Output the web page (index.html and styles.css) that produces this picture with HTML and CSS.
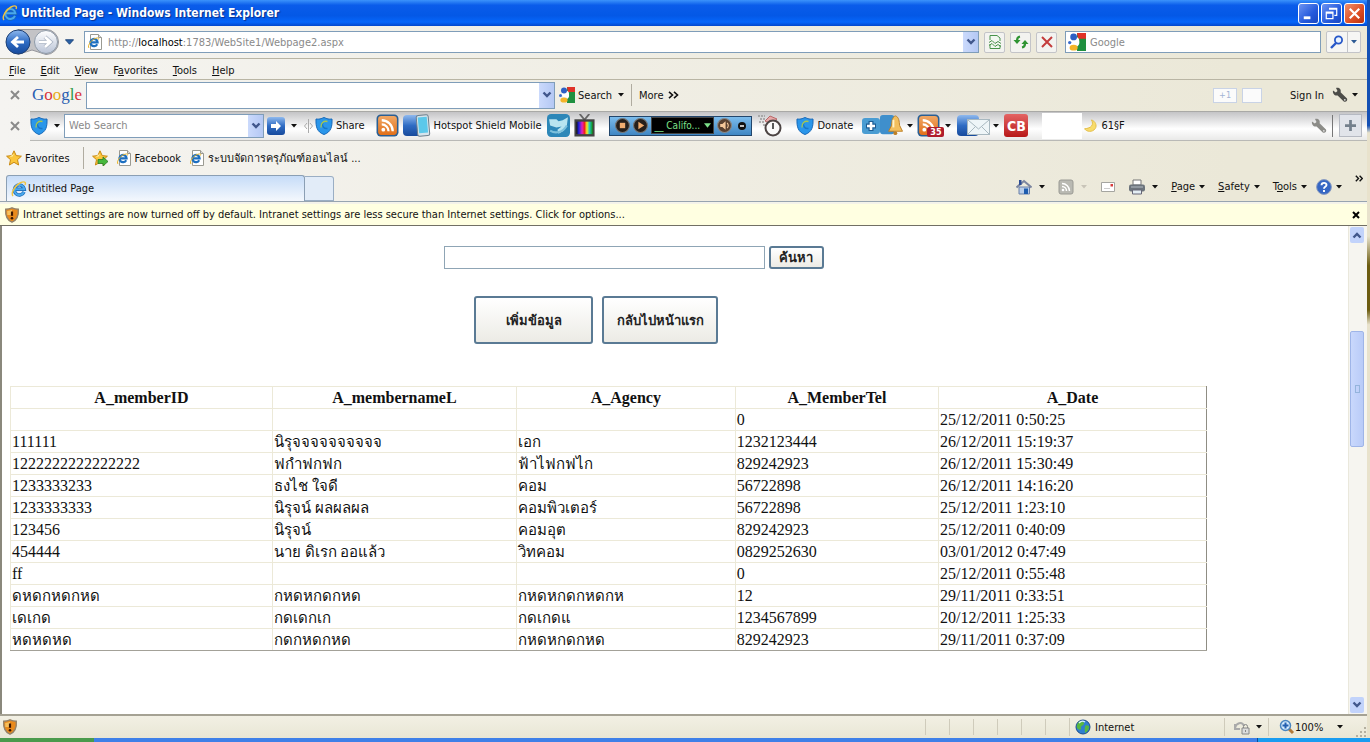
FILE: index.html
```html
<!DOCTYPE html>
<html lang="th">
<head>
    <meta charset="UTF-8">
    <meta name="viewport" content="width=device-width, initial-scale=1.0">
    <title>Untitled Page - Windows Internet Explorer</title>
    <link rel="stylesheet" href="styles.css">
</head>
<body>

<!-- Shared icons -->
<svg class="defs" aria-hidden="true">
    <defs>
        <linearGradient id="g-blue" x1="0" y1="0" x2="0" y2="1"><stop offset="0" stop-color="#8fb9ee"/><stop offset=".5" stop-color="#2f6cc4"/><stop offset="1" stop-color="#174a9c"/></linearGradient>
        <linearGradient id="g-silver" x1="0" y1="0" x2="0" y2="1"><stop offset="0" stop-color="#ffffff"/><stop offset="1" stop-color="#b9c3d6"/></linearGradient>
        <linearGradient id="g-orange" x1="0" y1="0" x2="0" y2="1"><stop offset="0" stop-color="#f0a765"/><stop offset="1" stop-color="#e2701a"/></linearGradient>
        <linearGradient id="g-rainbow"><stop offset="0" stop-color="#111"/><stop offset=".15" stop-color="#2020e0"/><stop offset=".35" stop-color="#e020c0"/><stop offset=".5" stop-color="#f02020"/><stop offset=".65" stop-color="#f0f020"/><stop offset=".8" stop-color="#20c8c8"/><stop offset="1" stop-color="#109010"/></linearGradient>
    </defs>
    <symbol id="i-ie" viewBox="0 0 16 16">
        <path d="M13 10.800a5 5 0 1 1 .3-2.600H4" fill="none" stroke="#1a66b4" stroke-width="3.400"/>
        <path d="M13 10.800a5 5 0 1 1 .3-2.600H4" fill="none" stroke="#48a8ec" stroke-width="2"/>
        <path d="M2 15C-.5 12 4 4.500 9 2c4-2 6.500-1.200 5 2" fill="none" stroke="#f0c440" stroke-width="1.400"/>
    </symbol>
    <symbol id="i-page" viewBox="0 0 16 16">
        <path d="M3.500.5h8l3 3v12h-11z" fill="#fff" stroke="#9a9a92"/>
        <path d="M11.500.5v3h3" fill="#ddd" stroke="#9a9a92"/>
        <path d="M10.200 10.200a3.600 3.600 0 1 1 .4-1.800H4" fill="none" stroke="#1d6fc0" stroke-width="2.200"/>
        <path d="M2 14C0 12 4 6 8 4.500c3-1 4.500-.8 3.500 1" fill="none" stroke="#e8b62c"/>
    </symbol>
    <symbol id="i-goog" viewBox="0 0 16 16">
        <path d="M8 0h8v16H8z" fill="#1f9040"/><path d="M8 0h8v5H9z" fill="#e03228"/>
        <circle cx="6.500" cy="7" r="3.500" fill="#fff"/><circle cx="5" cy="3.500" r="3" fill="#2d5fc4"/>
        <circle cx="1.500" cy="8.500" r="1.500" fill="#3a6ccc"/><ellipse cx="5" cy="13" rx="3.600" ry="2.600" fill="#f4b428"/>
        <path d="M9 6c2 2 1 5-1 6V7z" fill="#fff"/>
    </symbol>
    <symbol id="i-shield" viewBox="0 0 18 18">
        <path d="M1 2c3 .5 5-.2 8-1.500C12 1.800 14 2.500 17 2c.3 8-1 13-8 15.500C2 15 .7 10 1 2z" fill="#2a96ea" stroke="#1668b8"/>
        <path d="M12.500 11.500A4.300 4.300 0 0 1 8 5" fill="none" stroke="#1878c8" stroke-width="1.500"/>
        <path d="M12.500 4.500c-4-1-7 1.500-6.500 6" fill="none" stroke="#a8c850" stroke-width="1.300"/>
    </symbol>
    <symbol id="i-rss" viewBox="0 0 22 22">
        <rect x=".5" y=".5" width="21" height="21" rx="4" fill="#2a5f94"/>
        <rect x="2" y="2" width="18" height="18" rx="3" fill="url(#g-orange)"/>
        <circle cx="7" cy="15" r="1.800" fill="#fff"/><path d="M5.500 10a6.500 6.500 0 0 1 6.500 6.500M5.500 6A10.500 10.500 0 0 1 16 16.500" fill="none" stroke="#fff" stroke-width="2.200"/>
    </symbol>
    <symbol id="i-wrench" viewBox="0 0 16 16">
        <path d="M1 3.500 3.800 5.500 5.500 4 4 1C7 0 9.500 2.500 8.600 5.300L15 11.500c1 2-1.200 4.200-3.200 3L5.600 8.400C3 9.200.3 6.800 1 3.500z" fill="currentColor"/>
        <circle cx="12.800" cy="12.800" r=".9" fill="#ddd"/>
    </symbol>
    <symbol id="i-alert" viewBox="0 0 16 16">
        <path d="M8 .8c2 1 4 1.400 6.300 1.400.5 6.500-.8 10.500-6.300 13C2.500 12.700 1.200 8.700 1.700 2.200 4 2.200 6 1.800 8 .8z" fill="#e98a1c" stroke="#93826a" stroke-width="1.400"/>
        <path d="M3.200 4c2 0 3.300-.5 4.800-1.200V8H3.300z" fill="#f7c05c"/>
        <path d="M8 4.500v4.300" stroke="#3c1600" stroke-width="2.200"/><circle cx="8" cy="11.300" r="1.300" fill="#3c1600"/>
    </symbol>
    <symbol id="i-star" viewBox="0 0 16 16">
        <path d="m8 .8 2.200 4.800 5.200.6-3.900 3.500 1.100 5.300L8 12.300 3.400 15l1.100-5.300L.6 6.200l5.200-.6z" fill="#fbc63c" stroke="#c98912"/>
        <path d="M8 3.500 6.600 6.600 3.500 7z" fill="#ffefa8"/>
    </symbol>
    <symbol id="i-chev" viewBox="0 0 10 8"><path d="m1.500 1.500 3.500 3.500 3.500-3.500" fill="none" stroke="#41578c" stroke-width="2.400"/></symbol>
    <symbol id="i-down" viewBox="0 0 6 4"><path d="M0 0h6L3 3.500z" fill="currentColor"/></symbol>
</svg>

<div class="window">
    <header class="titlebar">
        <svg class="ico"><use href="#i-ie"/></svg>
        <h1>Untitled Page - Windows Internet Explorer</h1>
        <button class="win-btn" aria-label="Minimize"><svg viewBox="0 0 20 20"><path d="M5 13h7v3H5z" fill="#fff"/></svg></button>
        <button class="win-btn" aria-label="Restore"><svg viewBox="0 0 20 20"><path d="M8 6V4.500h7.500V12H13M4.500 8.500h7v7h-7zM4 9.500h8M8 5.500h8" fill="none" stroke="#fff" stroke-width="1.300"/></svg></button>
        <button class="win-btn close" aria-label="Close"><svg viewBox="0 0 20 20"><path d="m5 5 10 10M15 5 5 15" stroke="#fff" stroke-width="2.300"/></svg></button>
    </header>

    <div class="address-row">
        <svg class="nav" viewBox="0 0 56 28">
            <path d="M14 1.500h28a12 12 0 0 1 0 25L28 22l-14 4.500z" fill="#c3c3c6" stroke="#96969c"/>
            <circle cx="14" cy="14" r="12" fill="url(#g-blue)" stroke="#1d3f74"/>
            <path d="M20 14H9m5-5-5.500 5 5.500 5" fill="none" stroke="#fff" stroke-width="2.800"/>
            <circle cx="42" cy="14" r="11.500" fill="url(#g-silver)" stroke="#8f9ba8"/>
            <path d="M35 14h11m-5-5 5.500 5-5.500 5" fill="none" stroke="#a6b0c0" stroke-width="4"/>
            <path d="M35 14h11m-5-5 5.500 5-5.500 5" fill="none" stroke="#fff" stroke-width="2.600"/>
        </svg>
        <button class="nav-more" aria-label="Recent pages"><svg viewBox="0 0 10 6"><path d="M.5.5h9L5 5.500z" fill="#2a62a8" stroke="#1a3f74"/></svg></button>
        <div class="address">
            <svg class="ico"><use href="#i-page"/></svg>
            <span class="url">http://<b>localhost</b>:1783/WebSite1/Webpage2.aspx</span>
            <button class="drop" aria-label="Show history"><svg><use href="#i-chev"/></svg></button>
        </div>
        <button class="tool-btn" aria-label="Compatibility view"><svg viewBox="0 0 16 16"><path d="M3 6V1.500h7L13 4v3M3 10v4.500h10V11" fill="#f2f8f0" stroke="#48934a"/><path d="m2 8.500 3-2 3 3 3-2 3 2M2 11.500l3-2 3 3 3-2 3 2" fill="none" stroke="#48934a"/></svg></button>
        <button class="tool-btn" aria-label="Refresh"><svg viewBox="0 0 16 16"><path d="M7 2.500C4.500 3 4 4 4 6.500M9 13.500c2.500-.5 3-1.500 3-4" fill="none" stroke="#2f9432" stroke-width="2.200"/><path d="M.5 6h7L4 10zM8.500 10h7L12 6z" fill="#2f9432"/></svg></button>
        <button class="tool-btn" aria-label="Stop"><svg viewBox="0 0 16 16"><path d="m3 3 10 10M13 3 3 13" stroke="#c43c3c" stroke-width="2"/></svg></button>
        <div class="search">
            <svg class="ico big"><use href="#i-goog"/></svg>
            <input type="text" placeholder="Google" aria-label="Search Google">
        </div>
        <div class="go">
            <button aria-label="Search"><svg viewBox="0 0 14 14"><circle cx="8.500" cy="5" r="3.600" fill="#eaf4ff" stroke="#2858c8" stroke-width="1.800"/><path d="m6 8-5 5" stroke="#2858c8" stroke-width="2.400"/></svg></button>
            <button class="narrow" aria-label="Search options"><svg class="caret"><use href="#i-down"/></svg></button>
        </div>
    </div>

    <nav class="menubar">
        <a href="#"><u>F</u>ile</a>
        <a href="#"><u>E</u>dit</a>
        <a href="#"><u>V</u>iew</a>
        <a href="#">F<u>a</u>vorites</a>
        <a href="#"><u>T</u>ools</a>
        <a href="#"><u>H</u>elp</a>
    </nav>

    <div class="bar google-bar">
        <button class="bar-close" aria-label="Close toolbar"><svg viewBox="0 0 10 10"><path d="m1 1 8 8M9 1 1 9" stroke="#8a8a8a" stroke-width="2"/></svg></button>
        <span class="google"><i class="b">G</i><i class="r">o</i><i class="y">o</i><i class="b">g</i><i class="g">l</i><i class="r">e</i></span>
        <div class="combo google-input">
            <input type="text" aria-label="Google toolbar search">
            <button class="drop" aria-label="Search history"><svg><use href="#i-chev"/></svg></button>
        </div>
        <button class="item"><svg class="ico"><use href="#i-goog"/></svg>Search<svg class="caret"><use href="#i-down"/></svg></button>
        <span class="divider"></span>
        <button class="item more">More <svg class="raq" viewBox="0 0 11 8"><path d="m1 .8 3.500 3.200L1 7.200M6 .8 9.500 4 6 7.200" fill="none" stroke="#111" stroke-width="1.600"/></svg></button>
        <span class="push plus-one">+1</span>
        <span class="blank"></span>
        <button class="item sign-in">Sign In</button>
        <button class="item dark"><svg class="ico"><use href="#i-wrench"/></svg><svg class="caret"><use href="#i-down"/></svg></button>
    </div>

    <div class="bar shield-bar">
        <button class="bar-close" aria-label="Close toolbar"><svg viewBox="0 0 10 10"><path d="m1 1 8 8M9 1 1 9" stroke="#8a8a8a" stroke-width="2"/></svg></button>
        <div class="strip">
            <button class="item shield-menu"><svg class="ico big"><use href="#i-shield"/></svg><svg class="caret"><use href="#i-down"/></svg></button>
            <div class="combo web-input">
                <input type="text" placeholder="Web Search" aria-label="Web Search">
                <button class="drop" aria-label="Search history"><svg><use href="#i-chev"/></svg></button>
            </div>
            <button class="item go-web"><svg class="ico big" viewBox="0 0 18 18"><rect width="18" height="18" rx="3" fill="url(#g-blue)"/><path d="M4 7h5V4l5 5-5 5v-3H4z" fill="#fff"/></svg><svg class="caret"><use href="#i-down"/></svg></button>
            <svg class="handle" viewBox="0 0 9 14"><path d="M3 4 .5 7 3 10M6 4l2.500 3L6 10M4.500 0v14" fill="none" stroke="#aaa"/></svg>
            <button class="item share"><svg class="ico big"><use href="#i-shield"/></svg>Share</button>
            <button class="item rss"><svg class="ico large"><use href="#i-rss"/></svg></button>
            <button class="item mobile"><svg class="wide" viewBox="0 0 28 24"><rect y="1" width="18" height="21" rx="4" fill="url(#g-blue)"/><rect x="14" y="1" width="12" height="21" rx="2" fill="#d6e4ec" stroke="#6d7f8c" transform="rotate(-5 20 12)"/><rect x="15.500" y="3" width="9" height="16" fill="#5cc8ea" transform="rotate(-5 20 12)"/></svg>Hotspot Shield Mobile</button>
            <button class="item msg"><svg class="ico large" viewBox="0 0 22 22"><rect width="22" height="22" rx="4" fill="#2d87b8"/><path d="M2 5h7l2 2 4-1 5-3-1 8-3 5-5 3-1-4 4-3-5 1-6-2z" fill="#b8e4f0"/><path d="M3 16c5 3 12 2 16-5" fill="none" stroke="#7cc0dc" stroke-width="2"/></svg></button>
            <button class="item tv"><svg class="ico large" viewBox="0 0 22 24"><path d="M6 0l5 6 5-6" fill="none" stroke="#666" stroke-width="2"/><rect x=".5" y="5.500" width="21" height="18" fill="#444"/><rect x="2.500" y="8" width="17" height="13" fill="url(#g-rainbow)"/></svg></button>
            <div class="player">
                <button aria-label="Stop"><svg viewBox="0 0 14 14"><circle cx="7" cy="7" r="6.500" fill="#26201c" stroke="#777"/><path d="M4.500 4.500h5v5h-5z" fill="#f0ad70"/></svg></button>
                <button aria-label="Play"><svg viewBox="0 0 14 14"><circle cx="7" cy="7" r="6.500" fill="#26201c" stroke="#777"/><path d="M5 3.500 10.500 7 5 10.500z" fill="#f0ad70"/></svg></button>
                <span class="station">__ Califo...<svg viewBox="0 0 8 5"><path d="M0 0h8L4 5z" fill="#7de08a"/></svg></span>
                <button aria-label="Volume"><svg viewBox="0 0 14 14"><circle cx="7" cy="7" r="6.500" fill="#5a4030" stroke="#888"/><path d="M3 5.500h2l3-2.500v8L5 8.500H3z" fill="#f6c79a"/><path d="M9.500 4.500q2 2.500 0 5" fill="none" stroke="#f6c79a"/></svg></button>
                <button class="mini" aria-label="Collapse"><svg viewBox="0 0 8 8"><circle cx="4" cy="4" r="4" fill="#111"/><path d="M2 4h4" stroke="#fff" stroke-width="1.500"/></svg></button>
            </div>
            <button class="item clock"><svg class="wide" viewBox="0 0 26 24"><path d="M1 2h7M3 5h6M2 8h6M6 11h4" stroke="#999" stroke-width="1.500" stroke-dasharray="2 1"/><path d="M8 7l5-5 7 3-6 5z" fill="#e8a8a8" stroke="#b86868"/><circle cx="16" cy="14" r="7.500" fill="#fafafa" stroke="#4c4444" stroke-width="2"/><path d="M16 9v6" stroke="#222" stroke-width="1.500"/></svg></button>
            <button class="item donate"><svg class="ico big"><use href="#i-shield"/></svg>Donate</button>
            <button class="item plus"><svg class="ico big" viewBox="0 0 18 18"><rect y="1" width="18" height="16" rx="3" fill="#4a9cd2"/><path d="M9 4v10M4 9h10" stroke="#1c5c94" stroke-width="5"/><path d="M9 5v8M5 9h8" stroke="#fff" stroke-width="2.600"/></svg></button>
            <button class="item bell"><svg class="ico large" viewBox="0 0 24 24"><rect y="1" width="15" height="20" rx="3" fill="#3f8fcc"/><path d="M16 2c4 1 4 6 4.500 10l3 6H9l3-6c.5-4 .5-9 4-10z" fill="#f2bf5e" stroke="#bd7f26"/><circle cx="16" cy="20" r="2" fill="#bd7f26"/><path d="M14 6v8" stroke="#fff2c8" stroke-width="2"/></svg><svg class="caret"><use href="#i-down"/></svg></button>
            <button class="item feeds"><svg class="ico large"><use href="#i-rss"/></svg><span class="badge">35</span><svg class="caret"><use href="#i-down"/></svg></button>
            <button class="item mail"><svg class="mail-ico" viewBox="0 0 34 24"><rect y="1" width="22" height="21" rx="4" fill="url(#g-blue)"/><rect x="10.500" y="5.500" width="22" height="15" fill="#eef5f8" stroke="#a8b8c0"/><path d="m11 6 10.500 9L32 6M11 20l7-7M32 20l-7-7" fill="none" stroke="#a8b8c0"/></svg><svg class="caret"><use href="#i-down"/></svg></button>
            <button class="item cb">CB</button>
            <span class="white-box"></span>
            <span class="weather"><svg viewBox="0 0 14 14"><path d="M8 1c3 5 0 9-7.500 9.500C3 14 9 14.500 12 10.500 14.500 7 12 2 8 1z" fill="#f8dc6c" stroke="#e2bc48"/></svg>61§F</span>
            <button class="item push gray"><svg class="ico"><use href="#i-wrench"/></svg></button>
            <span class="divider gray-line"></span>
            <button class="add" aria-label="Add"><svg viewBox="0 0 12 12"><path d="M6 0v12M0 6h12" stroke="#74808c" stroke-width="3"/></svg></button>
        </div>
    </div>

    <div class="favorites">
        <button class="item"><svg class="ico"><use href="#i-star"/></svg>Favorites</button>
        <span class="divider"></span>
        <button class="item"><svg class="ico" viewBox="0 0 16 16"><use href="#i-star"/><path d="M6 9.500h5V7l5 4.500-5 4.500v-2.500H6z" fill="#46b83c" stroke="#2a7a24" stroke-width=".8"/></svg></button>
        <a href="#"><svg class="ico"><use href="#i-page"/></svg>Facebook</a>
        <a href="#"><svg class="ico"><use href="#i-page"/></svg><span>ระบบจัดการครุภัณฑ์ออนไลน์ ...</span></a>
    </div>

    <div class="tabs">
        <a class="tab" href="#"><svg class="ico"><use href="#i-ie"/></svg>Untitled Page</a>
        <button class="new-tab" aria-label="New tab"></button>
        <div class="commands">
            <button class="item home"><svg class="ico" viewBox="0 0 16 16"><path d="M3 8h10.500v7H3z" fill="#b8cdea" stroke="#6a80a8"/><path d="M.5 8.500 8 2l7.500 6.500" fill="none" stroke="#7c86a0" stroke-width="2"/><path d="M3 1h2.500v5H3z" fill="#2c4c94"/><path d="M8 9.500h4V15H8z" fill="#1d5cae"/></svg><svg class="caret"><use href="#i-down"/></svg></button>
            <button class="item feed"><svg class="ico" viewBox="0 0 16 16"><rect x="1" y="1" width="14" height="14" rx="2" fill="#b9b9b2" stroke="#9a9a94"/><circle cx="5" cy="11" r="1.300" fill="#fff"/><path d="M4 7.500a4.500 4.500 0 0 1 4.500 4.500M4 4.500a7.500 7.500 0 0 1 7.500 7.500" fill="none" stroke="#fff" stroke-width="1.500"/></svg><svg class="caret faint"><use href="#i-down"/></svg></button>
            <button class="item read"><svg class="ico" viewBox="0 0 16 16"><path d="M1.500 3.500h13v9h-13z" fill="#fff" stroke="#a5a5a0"/><path d="M10.500 5h2.500v2.500h-2.500z" fill="#d83c3c"/><path d="M4 9.500h6" stroke="#ccc"/></svg></button>
            <button class="item print"><svg class="ico" viewBox="0 0 16 16"><path d="M4 1h8v5H4z" fill="#fff" stroke="#777"/><rect y="5.500" width="16" height="7" rx="2" fill="#6c747c"/><path d="M3.500 11h9v4h-9z" fill="#e4eef4" stroke="#667"/><path d="M2 8h12" stroke="#b5bcc4"/></svg><svg class="caret"><use href="#i-down"/></svg></button>
            <button class="item"><span><u>P</u>age</span><svg class="caret"><use href="#i-down"/></svg></button>
            <button class="item"><span><u>S</u>afety</span><svg class="caret"><use href="#i-down"/></svg></button>
            <button class="item"><span>T<u>o</u>ols</span><svg class="caret"><use href="#i-down"/></svg></button>
            <button class="item help"><svg class="ico" viewBox="0 0 16 16"><circle cx="8" cy="8" r="7.400" fill="#3667c4" stroke="#8a9cc0"/><path d="M5.500 6.300C5.500 3 10.700 3.200 10.500 6c0 1.800-2.500 1.800-2.500 3.700M8 11v2" fill="none" stroke="#fff" stroke-width="1.900"/></svg><svg class="caret"><use href="#i-down"/></svg></button>
            <svg class="overflow" viewBox="0 0 8 8"><path d="M.8.8 3.500 3.500.8 6.200M4.600.8l2.700 2.700-2.700 2.700" fill="none" stroke="#111" stroke-width="1.400"/></svg>
        </div>
    </div>

    <div class="infobar">
        <svg class="ico"><use href="#i-alert"/></svg>
        <p>Intranet settings are now turned off by default. Intranet settings are less secure than Internet settings. Click for options...</p>
        <button aria-label="Close"><svg viewBox="0 0 8 8"><path d="m1 1 6 6M7 1 1 7" stroke="#000" stroke-width="2"/></svg></button>
    </div>

    <div class="viewport">
        <main>
            <form class="search-form">
                <input type="text" aria-label="ค้นหา">
                <button type="submit">ค้นหา</button>
            </form>
            <div class="actions">
                <button class="add-data">เพิ่มข้อมูล</button>
                <button class="go-home">กลับไปหน้าแรก</button>
            </div>
            <table>
                <thead>
                    <tr><th class="c-id">A_memberID</th><th class="c-name">A_membernameL</th><th class="c-agency">A_Agency</th><th class="c-tel">A_MemberTel</th><th>A_Date</th></tr>
                </thead>
                <tbody>
                    <tr><td></td><td></td><td></td><td>0</td><td>25/12/2011 0:50:25</td></tr>
                    <tr><td>111111</td><td class="thai">นิรุจจจจจจจจจจ</td><td class="thai">เอก</td><td>1232123444</td><td>26/12/2011 15:19:37</td></tr>
                    <tr><td>1222222222222222</td><td class="thai">ฟกำฟกฟก</td><td class="thai">ฟ้าไฟกฟไก</td><td>829242923</td><td>26/12/2011 15:30:49</td></tr>
                    <tr><td>1233333233</td><td class="thai">ธงไช ใจดี</td><td class="thai">คอม</td><td>56722898</td><td>26/12/2011 14:16:20</td></tr>
                    <tr><td>1233333333</td><td class="thai">นิรุจน์ ผลผลผล</td><td class="thai">คอมพิวเตอร์</td><td>56722898</td><td>25/12/2011 1:23:10</td></tr>
                    <tr><td>123456</td><td class="thai">นิรุจน์</td><td class="thai">คอมอุต</td><td>829242923</td><td>25/12/2011 0:40:09</td></tr>
                    <tr><td>454444</td><td class="thai">นาย ดิเรก ออแล้ว</td><td class="thai">วิทคอม</td><td>0829252630</td><td>03/01/2012 0:47:49</td></tr>
                    <tr><td>ff</td><td></td><td></td><td>0</td><td>25/12/2011 0:55:48</td></tr>
                    <tr><td class="thai">ดหดกหดกหด</td><td class="thai">กหดหกดกหด</td><td class="thai">กหดหกดกหดกห</td><td>12</td><td>29/11/2011 0:33:51</td></tr>
                    <tr><td class="thai">เดเกด</td><td class="thai">กดเดกเก</td><td class="thai">กดเกดแ</td><td>1234567899</td><td>20/12/2011 1:25:33</td></tr>
                    <tr><td class="thai">หดหดหด</td><td class="thai">กดกหดกหด</td><td class="thai">กหดหกดกหด</td><td>829242923</td><td>29/11/2011 0:37:09</td></tr>
                </tbody>
            </table>
        </main>
        <div class="scrollbar">
            <button class="up" aria-label="Scroll up"><svg><use href="#i-chev"/></svg></button>
            <div class="track"><div class="thumb"><span></span></div></div>
            <button aria-label="Scroll down"><svg><use href="#i-chev"/></svg></button>
        </div>
    </div>

    <footer class="statusbar">
        <div class="message"><svg class="ico"><use href="#i-alert"/></svg></div>
        <span class="pane"></span><span class="pane"></span><span class="pane"></span><span class="pane"></span><span class="pane"></span><span class="pane"></span>
        <div class="zone"><svg class="ico" viewBox="0 0 16 16"><circle cx="8" cy="8" r="7" fill="#2f7fd0" stroke="#1c4c8c"/><path d="M3 4c2-3 5-2 6 0S5 7 6 9s-2 2-3 1-2-3 0-6zM11 6l3 1c0 4-2 6-4 7 0-3-1-5 1-8z" fill="#58b840"/><path d="M4 4q3-3 6-1" fill="none" stroke="#d8f0ff" stroke-width="1.300"/></svg>Internet</div>
        <button class="item protect"><svg class="ico" viewBox="0 0 16 16"><path d="M1 9c1-5 7-7 9-2M1 5v5h5" fill="none" stroke="#aaa" stroke-width="2"/><path d="M8 9h7v6H8z" fill="#ddd" stroke="#888"/><path d="M9.500 9V7.500a2 2 0 0 1 4 0V9M11.500 11v2" fill="none" stroke="#888"/></svg><svg class="caret"><use href="#i-down"/></svg></button>
        <button class="item zoom"><svg class="ico" viewBox="0 0 16 16"><path d="m9 9 5 5" stroke="#b07838" stroke-width="3"/><circle cx="6.500" cy="6.500" r="5" fill="#d4eafc" stroke="#4a86c0" stroke-width="1.500"/><path d="M6.500 3.500v6M3.500 6.500h6" stroke="#2360b0" stroke-width="2"/></svg>100%<svg class="caret"><use href="#i-down"/></svg></button>
        <svg class="grip" viewBox="0 0 12 12"><path d="M9 1h2v2H9zM5 5h2v2H5zM9 5h2v2H9zM1 9h2v2H1zM5 9h2v2H5zM9 9h2v2H9z" fill="#b4b0a0"/></svg>
    </footer>
</div>
<div class="wallpaper"></div>
<div class="taskbar"><span class="start"></span><span class="tray"></span></div>

</body>
</html>
```
FILE: styles.css
```css
* {
    box-sizing: border-box;
}
body {
    display: grid;
    grid-template-columns: 1fr 3px;
    grid-template-rows: 1fr 4px;
    height: 100vh;
    margin: 0;
    overflow: hidden;
    font-family: "DejaVu Sans Condensed", "Noto Sans", sans-serif;
    font-size: 11px;
    color: #111;
}
button {
    display: flex;
    align-items: center;
    padding: 0;
    border: 0;
    background: none;
    font: inherit;
    color: inherit;
}
a {
    color: inherit;
    text-decoration: none;
}
input {
    min-width: 0;
    font: inherit;
}
input::placeholder {
    color: #8a8a8a;
    opacity: 1;
}
svg {
    display: block;
    flex: none;
}
.defs {
    position: absolute;
    width: 0;
    height: 0;
}
.ico {
    width: 16px;
    height: 16px;
}
.big {
    width: 18px;
    height: 18px;
}
.large {
    width: 23px;
    height: 23px;
}
.wide {
    width: 28px;
    height: 24px;
}
.caret {
    width: 6px;
    height: 4px;
    margin-left: 6px;
}
.push {
    margin-left: auto;
}
.item {
    white-space: nowrap;
}
.window {
    display: flex;
    flex-direction: column;
    min-width: 0;
    min-height: 0;
    background: linear-gradient(90deg, #f5f4f1, #ebe8d8 90%);
}

/* Title bar */
.titlebar {
    display: flex;
    align-items: center;
    gap: 2px;
    height: 26px;
    padding: 0 2px;
    background: linear-gradient(#3b93fb, #0a5cea 20%, #0458e6 60%, #0666fa 85%, #0347cc);
}
h1 {
    flex: 1;
    margin: 0 0 0 1px;
    font: bold 12px "DejaVu Sans Condensed", sans-serif;
    color: #fff;
    text-shadow: 1px 1px 1px #0a2f8c;
}
.win-btn {
    width: 21px;
    height: 21px;
    border: 1px solid #fff;
    border-radius: 3px;
    background: linear-gradient(135deg, #6d94f2, #2459dc 60%, #1a48c0);
}
.win-btn.close {
    background: linear-gradient(135deg, #f0906c, #dc4c22 60%, #b83010);
}

/* Address row */
.address-row {
    display: flex;
    align-items: center;
    gap: 5px;
    height: 33px;
    padding: 0 6px 0 4px;
    border-bottom: 1px solid #b9b5a4;
}
.nav {
    width: 56px;
    height: 28px;
}
.nav-more {
    width: 14px;
}
.nav-more svg {
    width: 9px;
    height: 6px;
}
.address,
.search,
.combo {
    display: flex;
    align-items: center;
    border: 1px solid #7f9db9;
    background: #fff;
}
.address {
    flex: 1;
    gap: 5px;
    height: 22px;
    padding-left: 2px;
}
.url {
    flex: 1;
    color: #8a8a8a;
}
.url b {
    font-weight: normal;
    color: #000;
}
.drop {
    justify-content: center;
    width: 15px;
    height: 100%;
    background: linear-gradient(90deg, #cbdafc, #b4c8f4);
}
.drop svg,
.scrollbar svg {
    width: 10px;
    height: 8px;
}
.tool-btn {
    justify-content: center;
    width: 21px;
    height: 21px;
    border: 1px solid #c3c4c8;
    border-radius: 2px;
    background: #f3f3f0;
}
.tool-btn svg {
    width: 16px;
    height: 16px;
}
.search {
    width: 256px;
    height: 22px;
    margin-left: 3px;
    padding-left: 2px;
}
.search input,
.combo input {
    flex: 1;
    border: 0;
    outline: 0;
    background: none;
    padding: 0 4px;
}
.go {
    display: flex;
    width: 35px;
    height: 22px;
    border: 1px solid #c3c4c8;
    border-radius: 2px;
    background: #f6f6f4;
}
.go button {
    flex: 1;
    justify-content: center;
}
.go button > svg:not(.caret) {
    width: 14px;
    height: 14px;
}
.go .narrow {
    flex: none;
    width: 13px;
    border-left: 1px solid #c3c4c8;
}
.go .caret {
    margin: 0;
    color: #2c5a94;
}

/* Menu */
.menubar {
    display: flex;
    align-items: center;
    gap: 15px;
    height: 21px;
    padding: 3px 9px 0;
    border-bottom: 1px solid #b9b5a4;
}

/* Toolbars */
.bar {
    display: flex;
    align-items: center;
    height: 31px;
    padding-left: 10px;
}
.bar-close svg {
    width: 10px;
    height: 10px;
}
.divider {
    width: 1px;
    height: 22px;
    background: #b0aca0;
}
.google-bar {
    height: 30px;
    padding-right: 9px;
}
.google {
    width: 66px;
    padding-left: 12px;
    font: 17px "Liberation Serif", serif;
}
.google i {
    font-style: normal;
}
.google .b {
    color: #2a5db0;
}
.google .r {
    color: #d8343c;
}
.google .y {
    color: #e8ac18;
}
.google .g {
    color: #2c9a48;
}
.google-input {
    width: 469px;
    height: 27px;
    margin-right: 4px;
}
.google-bar .item .ico:first-child {
    margin-right: 3px;
}
.google-bar .divider {
    margin: 0 7px;
}
.raq {
    width: 11px;
    height: 8px;
    margin-left: 4px;
}
.plus-one,
.blank {
    width: 24px;
    height: 15px;
    border: 1px solid #c9d3e6;
    background: #fbfbfb;
    font-size: 9px;
    line-height: 13px;
    text-align: center;
    color: #a3b4d4;
}
.blank {
    width: 20px;
    margin: 0 28px 0 5px;
}
.sign-in {
    margin-right: 8px;
}
.dark .ico {
    color: #4c4c48;
}
.dark .caret {
    margin-left: 1px;
}
.gray .ico {
    color: #8c8c88;
}
.strip {
    display: flex;
    align-items: center;
    flex: 1;
    height: 30px;
    margin-left: 10px;
    padding: 0 5px 0 0;
    border-top: 1px solid #a9a9a6;
    border-bottom: 1px solid #b9b9b6;
    background: linear-gradient(#c4c4c6, #ececed 40%, #fff 60%, #e9e9e8);
}
.web-input {
    width: 200px;
    height: 24px;
    margin: 0 3px 0 4px;
}
.handle {
    width: 9px;
    height: 14px;
    margin: 0 2px 0 7px;
}
.share .ico,
.donate .ico,
.mobile .wide {
    margin-right: 3px;
}
.rss {
    margin-left: 11px;
}
.mobile {
    margin-left: 4px;
}
.msg {
    margin-left: 6px;
}
.tv {
    margin-left: 3px;
}
.player {
    display: flex;
    align-items: center;
    gap: 3px;
    width: 143px;
    height: 20px;
    margin-left: 13px;
    padding: 0 5px;
    border: 1px solid #22466c;
    background: linear-gradient(#7cbcec, #3f86c4);
}
.player button svg {
    width: 15px;
    height: 15px;
}
.player .mini svg {
    width: 8px;
    height: 8px;
}
.player .mini {
    margin-left: 3px;
}
.station {
    display: flex;
    align-items: center;
    justify-content: space-between;
    flex: 1;
    height: 17px;
    padding: 0 2px;
    border: 1px solid #444;
    background: #000;
    font-size: 10px;
    color: #7de08a;
    white-space: nowrap;
}
.station svg {
    width: 7px;
    height: 5px;
}
.clock {
    margin-left: 4px;
}
.donate {
    margin-left: 12px;
}
.plus {
    margin-left: 9px;
}
.bell .caret,
.feeds .caret,
.mail .caret {
    margin-left: 4px;
}
.feeds {
    position: relative;
    margin-left: 4px;
}
.feeds .caret {
    margin-left: 5px;
}
.badge {
    position: absolute;
    left: 10px;
    bottom: 0;
    width: 17px;
    height: 10px;
    border-radius: 2px;
    background: #b01c2c;
    font-size: 9px;
    font-weight: bold;
    line-height: 10px;
    color: #fff;
    text-align: center;
}
.mail {
    margin-left: 6px;
}
.mail-ico {
    width: 34px;
    height: 24px;
}
.mail .caret {
    margin-left: 2px;
}
.cb {
    justify-content: center;
    width: 24px;
    height: 23px;
    margin-left: 5px;
    border-radius: 3px;
    background: linear-gradient(#e46464, #b81818);
    font-size: 14px;
    font-weight: bold;
    color: #fff;
}
.white-box {
    width: 40px;
    height: 26px;
    margin: 0 2px 0 14px;
    background: #fff;
}
.weather {
    display: flex;
    align-items: center;
}
.weather svg {
    width: 13px;
    height: 13px;
    margin-right: 4px;
}
.gray-line {
    margin: 0 6px 0 5px;
    background: #777;
}
.add {
    justify-content: center;
    width: 23px;
    height: 23px;
    border: 1px solid #b5b9c2;
    background: #e1e4ea;
}
.add svg {
    width: 11px;
    height: 11px;
}

/* Favorites */
.favorites {
    display: flex;
    align-items: center;
    gap: 8px;
    height: 32px;
    padding: 2px 6px 0;
}
.favorites .item,
.favorites a {
    display: flex;
    align-items: center;
    gap: 3px;
}
.favorites .divider {
    margin-left: 5px;
}

/* Tabs */
.tabs {
    display: flex;
    align-items: flex-end;
    height: 29px;
    padding-left: 6px;
    border-bottom: 1px solid #97a4b0;
}
.tab {
    display: flex;
    align-items: center;
    gap: 1px;
    width: 299px;
    height: 26px;
    padding-left: 4px;
    border: 1px solid #8b9fb4;
    border-bottom: 0;
    border-radius: 3px 3px 0 0;
    background: linear-gradient(#c6dcf8, #f4f8fd);
}
.new-tab {
    width: 29px;
    height: 25px;
    border: 1px solid #9aaec4;
    border-left: 0;
    border-radius: 0 3px 0 0;
    background: #e2ecf8;
}
.commands {
    display: flex;
    align-items: center;
    gap: 13px;
    height: 29px;
    margin-left: auto;
    padding-right: 4px;
}
.commands .caret {
    margin-left: 4px;
}
.home .caret,
.feed .caret,
.print .caret {
    margin-left: 7px;
}
.commands .help {
    margin-left: -4px;
}
.faint {
    color: #c8c4b8;
}
.overflow {
    align-self: flex-start;
    width: 8px;
    height: 8px;
    margin-top: 3px;
}

/* Information bar */
.infobar {
    display: flex;
    align-items: center;
    gap: 3px;
    height: 24px;
    padding: 0 7px 0 4px;
    border-top: 2px solid #f4f3ea;
    border-bottom: 1px solid #716f64;
    background: #ffffe1;
}
.infobar p {
    flex: 1;
    margin: 0;
    white-space: nowrap;
}
.infobar button svg {
    width: 8px;
    height: 8px;
}

/* Web page */
.viewport {
    display: flex;
    flex: 1;
    min-height: 0;
    border-left: 2px solid #8a887c;
    background: #fff;
}
main {
    flex: 1;
    padding: 20px 8px 0;
    overflow: hidden;
    font: 16px "Liberation Serif", "Noto Sans", sans-serif;
}
main button {
    justify-content: center;
    border: 2px solid #5a7a94;
    border-radius: 3px;
    background: linear-gradient(#fff, #ecebe5);
    font-size: 13px;
    font-weight: bold;
    color: #222;
}
.search-form {
    display: flex;
    gap: 4px;
    margin-left: 32.6%;
}
.search-form input {
    width: 321px;
    height: 23px;
    border: 1px solid #8fa5b5;
}
.search-form button {
    width: 55px;
    height: 23px;
}
.actions {
    display: flex;
    gap: 9px;
    margin: 27px 0 42px 34.9%;
}
.actions button {
    width: 119px;
    height: 48px;
}
.actions .go-home {
    width: 116px;
}
table {
    width: 90%;
    border: 1px solid #e6e2d2;
    border-right-color: #8f8d84;
    border-bottom-color: #a3a198;
    border-collapse: collapse;
    table-layout: fixed;
}
th,
td {
    height: 22px;
    padding: 0 1px;
    border: 1px solid #ece9d8;
    line-height: 20px;
    white-space: nowrap;
}
th:last-child,
td:last-child {
    border-right-color: #8f8d84;
}
tr:last-child td {
    border-bottom-color: #a3a198;
}
.thai {
    font-size: 15px;
}
.c-id {
    width: 21.9%;
}
.c-name {
    width: 20.4%;
}
.c-agency {
    width: 18.3%;
}
.c-tel {
    width: 17%;
}

/* Scrollbar */
.scrollbar {
    display: flex;
    flex-direction: column;
    width: 19px;
    padding: 1px 3px 1px 1px;
    border-left: 1px solid #eae8dc;
    background: #f6f5f0;
}
.scrollbar button {
    justify-content: center;
    height: 16px;
    border-radius: 2px;
    background: #c2d3fb;
}
.scrollbar .up svg {
    transform: rotate(180deg);
}
.track {
    flex: 1;
}
.thumb {
    display: flex;
    align-items: center;
    justify-content: center;
    height: 116px;
    margin-top: 88px;
    border: 1px solid #9fb5e8;
    border-radius: 2px;
    background: linear-gradient(90deg, #c9d8fc, #b9cbf8);
}
.thumb span {
    width: 5px;
    height: 8px;
    border: 1px solid #94b4dc;
}

/* Status bar */
.statusbar {
    display: flex;
    align-items: center;
    height: 24px;
    border-top: 2px solid #a5a294;
    background: linear-gradient(#f2f0e4, #e9e6d5);
}
.message {
    flex: 1;
    padding-left: 2px;
}
.pane {
    width: 24px;
    height: 16px;
    border-left: 1px solid #cfcbbb;
}
.zone {
    display: flex;
    align-items: center;
    gap: 4px;
    width: 155px;
    height: 18px;
    padding-left: 5px;
    border-left: 1px solid #cfcbbb;
}
.protect {
    width: 44px;
    height: 18px;
    padding-left: 9px;
    border-left: 1px solid #cfcbbb;
}
.zoom {
    width: 87px;
    height: 18px;
    padding-left: 10px;
    border-left: 1px solid #cfcbbb;
}
.zoom .caret {
    margin-left: 14px;
}
.grip {
    align-self: flex-end;
    width: 12px;
    height: 12px;
}

/* Desktop around the window */
.wallpaper {
    background: linear-gradient(#1450b4, #1450b4 17%, #e8e2cc 18%, #e8e2cc 32%, #6c5c10 36%, #6c5c10 42%, #e8e2cc 44%, #e8e2cc 100%);
}
.taskbar {
    display: flex;
    grid-column: 1 / -1;
    justify-content: space-between;
    background: #3f80e8;
}
.start {
    width: 94px;
    background: #4a9a4c;
}
.tray {
    width: 113px;
    border-left: 1px solid #0c4c94;
    background: #1a9cf0;
}
```
